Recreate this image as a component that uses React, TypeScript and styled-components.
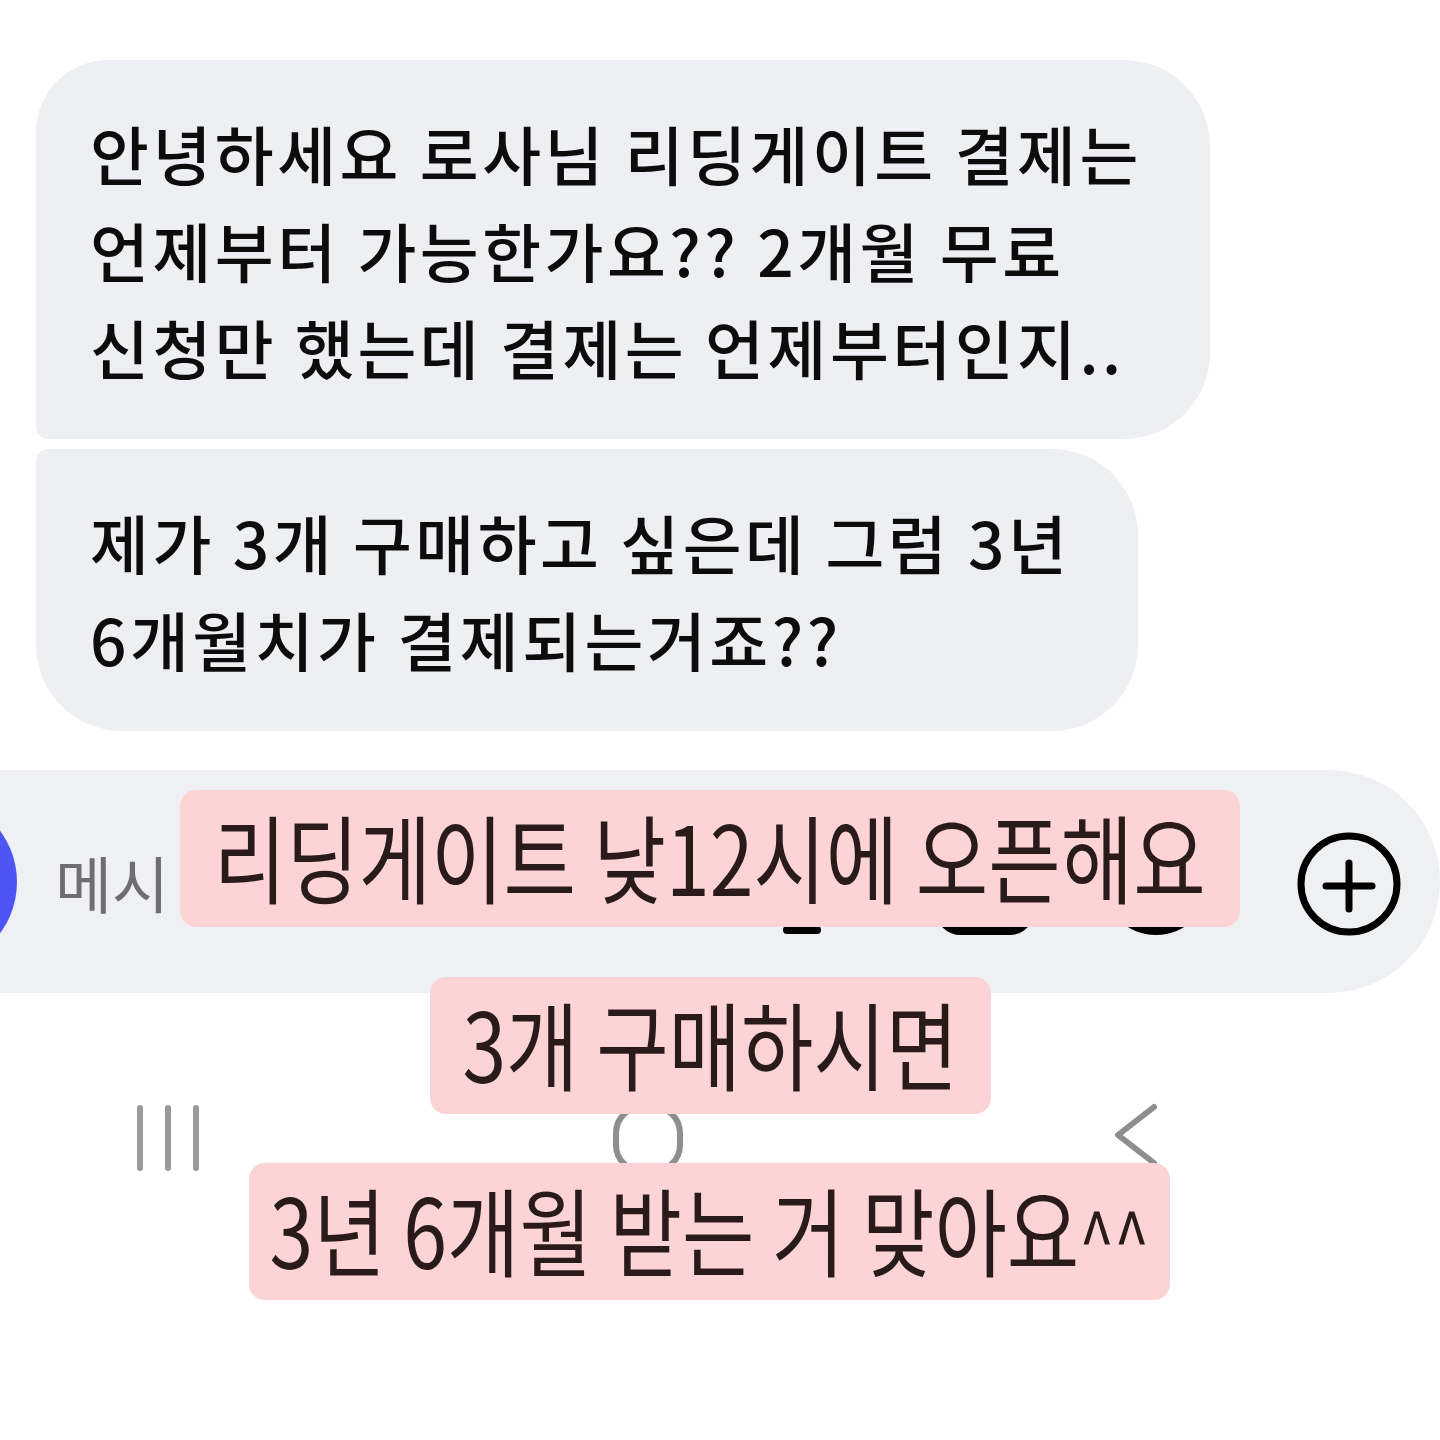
import React from "react";
import styled, { createGlobalStyle } from "styled-components";

const GlobalStyle = createGlobalStyle`
  html, body {
    margin: 0;
    padding: 0;
    background: #fff;
  }
  body {
    font-family: "Noto Sans CJK KR", "Noto Sans", sans-serif;
    overflow: hidden;
  }
  * {
    box-sizing: border-box;
  }
`;

const Page = styled.div`
  position: relative;
  width: 1440px;
  height: 1440px;
  overflow: hidden;
  padding-top: 60px;
  background: #fff;
`;

const Thread = styled.div`
  display: flex;
  flex-direction: column;
  align-items: flex-start;
  gap: 10px;
  margin-left: 36px;
`;

const Bubble = styled.div<{ $first?: boolean }>`
  background: #eeeff3;
  color: #0c0c0c;
  font-size: 64px;
  line-height: 97px;
  font-weight: 500;
  letter-spacing: 3.5px;
  padding: 44px 68px 44px 54px;
  border-radius: ${(p) => (p.$first ? "72px 86px 86px 12px" : "12px 86px 86px 86px")};
`;

const Line = styled.span`
  display: block;
  white-space: nowrap;
`;

const InputBar = styled.div`
  display: flex;
  align-items: center;
  margin-top: 39px;
  height: 223px;
  width: 1440px;
  padding-right: 36px;
  background: #eef0f4;
  border-radius: 0 112px 112px 0;
`;

const CameraDot = styled.div`
  flex: none;
  width: 172px;
  height: 172px;
  margin-left: -155px;
  border-radius: 50%;
  background: #4f55f4;
`;

const Placeholder = styled.span`
  flex: none;
  margin-left: 38px;
  font-size: 62px;
  color: #6e6e72;
  white-space: nowrap;
`;

const IconSlot = styled.div<{ $space?: number; $auto?: boolean }>`
  flex: none;
  display: flex;
  width: 110px;
  height: 110px;
  margin-left: ${(p) => (p.$auto ? "auto" : `${p.$space ?? 0}px`)};
`;

const NavBar = styled.div`
  display: flex;
  align-items: flex-start;
  margin-top: 110px;
  padding-left: 135px;
`;

const NavSlot = styled.div<{ $space?: number }>`
  flex: none;
  display: flex;
  margin-left: ${(p) => p.$space ?? 0}px;
`;

const Sticker = styled.div<{ $x: number; $y: number; $w: number }>`
  position: absolute;
  left: ${(p) => p.$x}px;
  top: ${(p) => p.$y}px;
  width: ${(p) => p.$w}px;
  height: 137px;
  padding-bottom: 8px;
  display: flex;
  align-items: center;
  justify-content: center;
  background: #fdd4d5;
  border-radius: 16px;
`;

/* the sticker font is a narrow one: squeeze the glyphs and give back the room */
const StickerText = styled.span`
  display: inline-block;
  margin: 0 -12%;
  font-size: 96px;
  line-height: 1;
  font-weight: 400;
  color: #2a1b1b;
  white-space: nowrap;
  transform: scaleX(0.82);
  transform-origin: center;
`;

const Caret = styled.span`
  font-size: 0.8em;
`;

const MicIcon = () => (
  <svg width="110" height="110" viewBox="0 0 110 110" fill="none" stroke="#000" strokeWidth="8" strokeLinecap="round">
    <rect x="40" y="12" width="30" height="54" rx="15" />
    <path d="M28 52c0 16 12 28 27 28s27-12 27-28" />
    <line x1="55" y1="80" x2="55" y2="103" />
    <line x1="40" y1="103" x2="70" y2="103" />
  </svg>
);

const GalleryIcon = () => (
  <svg width="110" height="110" viewBox="0 0 110 110" fill="none" stroke="#000" strokeWidth="8" strokeLinejoin="round">
    <rect x="9" y="16" width="92" height="88" rx="22" />
    <circle cx="38" cy="44" r="8" />
    <path d="M14 88l26-24 18 16 16-14 26 22" />
  </svg>
);

const EmojiIcon = () => (
  <svg width="110" height="110" viewBox="0 0 110 110" fill="none" stroke="#000" strokeWidth="8" strokeLinecap="round">
    <circle cx="55" cy="55" r="49" />
    <circle cx="38" cy="44" r="3" fill="#000" />
    <circle cx="72" cy="44" r="3" fill="#000" />
    <path d="M34 66c10 14 32 14 42 0" />
  </svg>
);

const PlusIcon = () => (
  <svg width="110" height="110" viewBox="0 0 110 110" fill="none" stroke="#000" strokeWidth="7" strokeLinecap="round">
    <circle cx="55" cy="57" r="48" />
    <line x1="32" y1="59" x2="78" y2="59" />
    <line x1="55" y1="36" x2="55" y2="82" />
  </svg>
);

const RecentIcon = () => (
  <svg width="66" height="70" viewBox="0 0 66 70" fill="none" stroke="#9a9a9a" strokeWidth="6" strokeLinecap="round">
    <line x1="5" y1="5" x2="5" y2="65" />
    <line x1="33" y1="5" x2="33" y2="65" />
    <line x1="61" y1="5" x2="61" y2="65" />
  </svg>
);

const HomeIcon = () => (
  <svg width="72" height="72" viewBox="0 0 72 72" fill="none" stroke="#8e8e8e" strokeWidth="6">
    <rect x="4" y="4" width="64" height="64" rx="26" />
  </svg>
);

const BackIcon = () => (
  <svg width="46" height="64" viewBox="0 0 46 64" fill="none" stroke="#8e8e8e" strokeWidth="6" strokeLinecap="round" strokeLinejoin="round">
    <polyline points="41,4 5,32 41,60" />
  </svg>
);

export default function App() {
  return (
    <>
      <GlobalStyle />
      <Page>
        <Thread>
          <Bubble $first>
            <Line>안녕하세요 로사님 리딩게이트 결제는</Line>
            <Line>언제부터 가능한가요?? 2개월 무료</Line>
            <Line>신청만 했는데 결제는 언제부터인지..</Line>
          </Bubble>
          <Bubble>
            <Line>제가 3개 구매하고 싶은데 그럼 3년</Line>
            <Line>6개월치가 결제되는거죠??</Line>
          </Bubble>
        </Thread>

        <InputBar>
          <CameraDot />
          <Placeholder>메시</Placeholder>
          <IconSlot $auto>
            <MicIcon />
          </IconSlot>
          <IconSlot $space={73}>
            <GalleryIcon />
          </IconSlot>
          <IconSlot $space={61}>
            <EmojiIcon />
          </IconSlot>
          <IconSlot $space={83}>
            <PlusIcon />
          </IconSlot>
        </InputBar>

        <NavBar>
          <NavSlot>
            <RecentIcon />
          </NavSlot>
          <NavSlot $space={411}>
            <HomeIcon />
          </NavSlot>
          <NavSlot $space={429}>
            <BackIcon />
          </NavSlot>
        </NavBar>

        <Sticker $x={180} $y={790} $w={1060}>
          <StickerText>리딩게이트 낮12시에 오픈해요</StickerText>
        </Sticker>
        <Sticker $x={430} $y={977} $w={561}>
          <StickerText>3개 구매하시면</StickerText>
        </Sticker>
        <Sticker $x={249} $y={1163} $w={921}>
          <StickerText>
            3년 6개월 받는 거 맞아요<Caret>^^</Caret>
          </StickerText>
        </Sticker>
      </Page>
    </>
  );
}
